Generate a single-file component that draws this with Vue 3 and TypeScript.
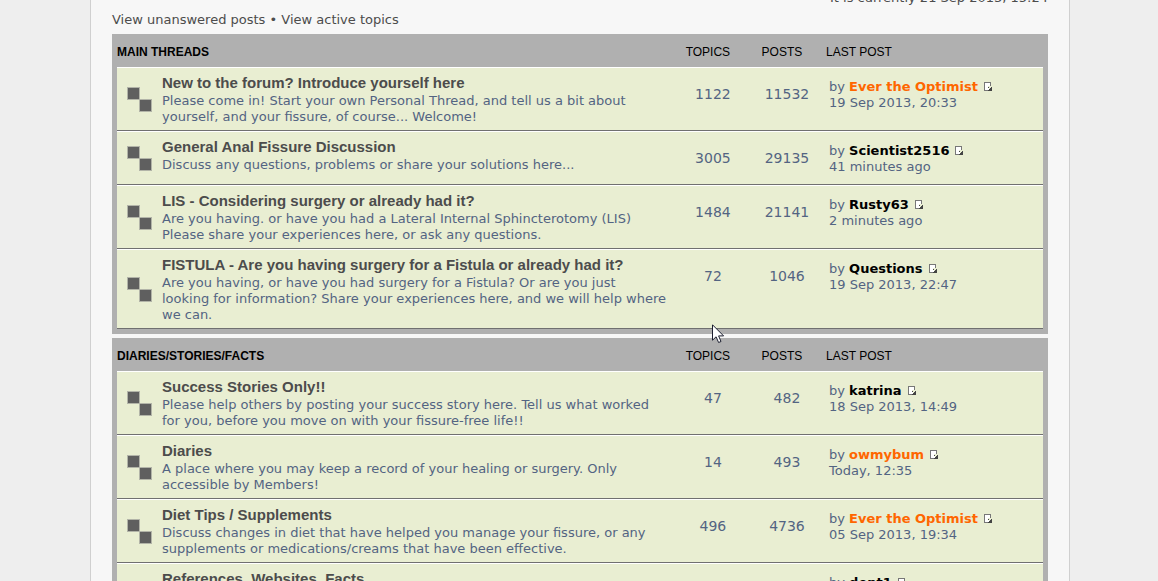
<script setup lang="ts">
interface Forum {
  title: string
  lines: string
  topics: number
  posts: number
  author: string
  staff?: boolean
  when: string
}
interface Category {
  name: string
  forums: Forum[]
}

const categories: Category[] = [
  {
    name: 'Main Threads',
    forums: [
      { title: 'New to the forum? Introduce yourself here', lines: 'Please come in! Start your own Personal Thread, and tell us a bit about yourself, and your fissure, of course... Welcome!', topics: 1122, posts: 11532, author: 'Ever the Optimist', staff: true, when: '19 Sep 2013, 20:33' },
      { title: 'General Anal Fissure Discussion', lines: 'Discuss any questions, problems or share your solutions here...', topics: 3005, posts: 29135, author: 'Scientist2516', when: '41 minutes ago' },
      { title: 'LIS - Considering surgery or already had it?', lines: 'Are you having. or have you had a Lateral Internal Sphincterotomy (LIS)\nPlease share your experiences here, or ask any questions.', topics: 1484, posts: 21141, author: 'Rusty63', when: '2 minutes ago' },
      { title: 'FISTULA - Are you having surgery for a Fistula or already had it?', lines: 'Are you having, or have you had surgery for a Fistula? Or are you just\nlooking for information? Share your experiences here, and we will help where we can.', topics: 72, posts: 1046, author: 'Questions', when: '19 Sep 2013, 22:47' },
    ],
  },
  {
    name: 'Diaries/Stories/Facts',
    forums: [
      { title: 'Success Stories Only!!', lines: 'Please help others by posting your success story here. Tell us what worked for you, before you move on with your fissure-free life!!', topics: 47, posts: 482, author: 'katrina', when: '18 Sep 2013, 14:49' },
      { title: 'Diaries', lines: 'A place where you may keep a record of your healing or surgery. Only accessible by Members!', topics: 14, posts: 493, author: 'owmybum', staff: true, when: 'Today, 12:35' },
      { title: 'Diet Tips / Supplements', lines: 'Discuss changes in diet that have helped you manage your fissure, or any supplements or medications/creams that have been effective.', topics: 496, posts: 4736, author: 'Ever the Optimist', staff: true, when: '05 Sep 2013, 19:34' },
      { title: 'References, Websites, Facts', lines: '', topics: 0, posts: 0, author: 'dept1', when: '' },
    ],
  },
]
</script>

<template>
  <div class="page">
    <main class="wrap">
      <p class="clock">It is currently 21 Sep 2013, 15:24</p>
      <nav class="links">
        <a href="#">View unanswered posts</a> • <a href="#">View active topics</a>
      </nav>
      <section v-for="cat in categories" :key="cat.name" class="panel">
        <table>
          <colgroup>
            <col class="c-icon"><col><col class="c-num"><col class="c-num"><col class="c-last">
          </colgroup>
          <thead>
            <tr>
              <th colspan="2" scope="col" class="h-name">{{ cat.name }}</th>
              <th scope="col" class="h-num">Topics</th>
              <th scope="col" class="h-num">Posts</th>
              <th scope="col" class="h-last">Last post</th>
            </tr>
          </thead>
          <tbody>
            <tr v-for="f in cat.forums" :key="f.title">
              <td class="status">
                <svg width="26" height="26" viewBox="0 0 26 26" aria-hidden="true">
                  <g fill="#5f5f5f" stroke="#b2b4a8">
                    <rect x="0.5" y="0.5" width="12" height="12" />
                    <rect x="12.5" y="12.5" width="12" height="12" />
                  </g>
                </svg>
              </td>
              <td class="topic">
                <a href="#" class="title">{{ f.title }}</a>
                <p class="desc">{{ f.lines }}</p>
              </td>
              <td class="num">{{ f.topics || '' }}</td>
              <td class="num">{{ f.posts || '' }}</td>
              <td class="last">
                by <a href="#" class="user" :class="{ staff: f.staff }">{{ f.author }}</a>
                <a href="#" class="jump" aria-label="View the latest post">
                  <svg width="9" height="9" viewBox="0 0 9 9" shape-rendering="crispEdges">
                    <path fill="#fff" d="M1 1h5v3H4v2h1v2H1z" />
                    <path fill="#777" d="M0 0h7v1H0zM0 0h1v9H0zM0 8h4v1H0zM6 1h1v3H6z" />
                    <path fill="#444" d="M8 4v5H4V8h1V7h1V6h1V5h1zM4 5h1v1H4z" />
                  </svg>
                </a>
                <br>{{ f.when }}
              </td>
            </tr>
          </tbody>
        </table>
      </section>
    </main>
    <svg class="pointer" width="13" height="20" viewBox="0 0 13 20" aria-hidden="true">
      <path d="M.5 .8v15.4l3.6-3.4 2.5 5.7 2.4-1-2.4-5.6h5z" fill="#fff" stroke="#1c1f30" />
    </svg>
  </div>
</template>

<style>
body {
  background: #eee;
}
</style>

<style scoped>
.page {
  position: relative;
  height: 100vh;
  overflow: hidden;
  padding-left: 2px;
  font: 13px/16px Verdana, "DejaVu Sans", sans-serif;
  color: #536482;
}
.wrap {
  box-sizing: border-box;
  max-width: 980px;
  min-height: 100%;
  margin: 0 auto;
  padding: 0 21px;
  border: solid #d0d0d0;
  border-width: 0 1px;
  background: #f7f7f7;
}
a {
  color: inherit;
  text-decoration: none;
}
p {
  margin: 0;
}
.clock {
  margin-top: -10px;
  text-align: right;
  color: #4c4c4c;
}
.links {
  padding: 6px 0;
  color: #4c4c4c;
}
.panel {
  margin-bottom: 4px;
  padding: 0 5px 5px;
  background: #b0b0b0;
}
table {
  width: 100%;
  table-layout: fixed;
  border-collapse: separate;
  border-spacing: 0;
}
.c-icon {
  width: 45px;
}
.c-num {
  width: 8%;
}
.c-last {
  width: 219px;
}
th {
  padding: 10px 0 7px;
  font: 12px/16px Arial, "Liberation Sans", sans-serif;
  color: #000;
  text-transform: uppercase;
  text-align: left;
}
.h-name {
  font-weight: bold;
}
.h-num {
  padding-right: 10px;
  text-align: center;
}
.h-last {
  padding-left: 2px;
}
td {
  padding: 0;
  border-top: 1px solid #fff;
  border-bottom: 1px solid #707070;
  background: #e9eed2;
  vertical-align: top;
}
.status {
  padding: 2px 0 0 10px;
  vertical-align: middle;
}
.status svg {
  display: block;
}
.topic {
  padding: 6px 8px 5px 0;
}
.title {
  display: block;
  font: bold 15px/18px Arial, "Liberation Sans", sans-serif;
  color: #4c4c4c;
}
.desc {
  padding-top: 1px;
  white-space: pre-line;
}
.desc:empty {
  min-height: 32px;
}
.num {
  padding-top: 17px;
  font-size: 14px;
  line-height: 18px;
  text-align: center;
}
.last {
  padding: 11px 0 9px 5px;
}
.user {
  font-weight: bold;
  color: #000;
}
.user.staff {
  color: #ff6600;
}
.jump {
  margin-left: 6px;
}
.jump svg {
  vertical-align: 0;
}
.pointer {
  position: absolute;
  left: 712px;
  top: 324px;
}
</style>
